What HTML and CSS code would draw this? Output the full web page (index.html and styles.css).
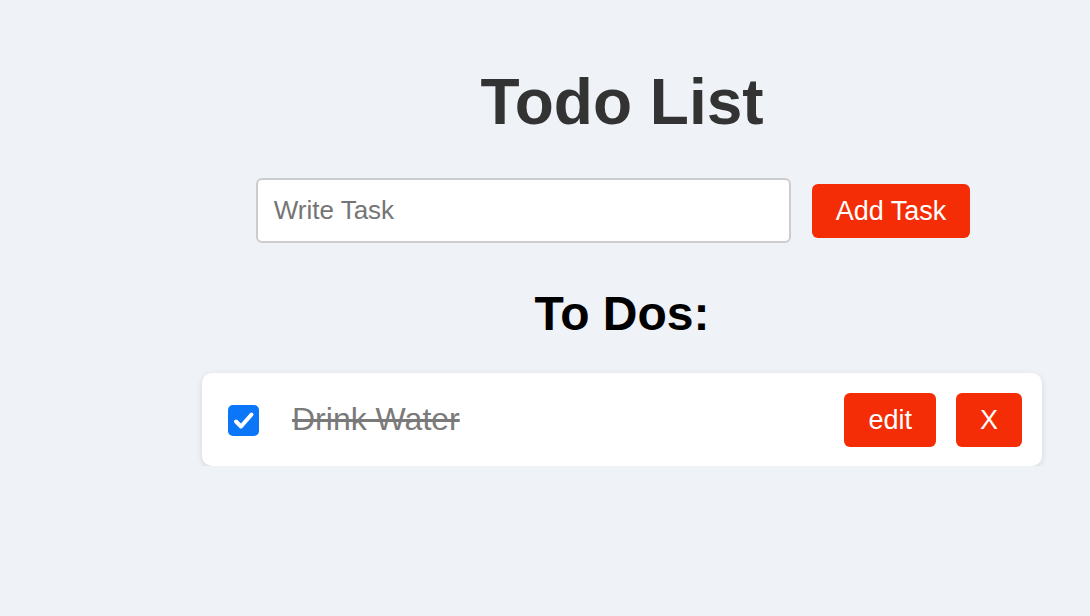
FILE: index.html
```html
<!DOCTYPE html>
<html>
<head>
<meta charset="utf-8">
<link rel="stylesheet" href="styles.css">
</head>
<body>
<div class="app">
  <h1 class="title">Todo List</h1>
  <div class="add-row">
    <input class="task-input" type="text" placeholder="Write Task">
    <button class="btn add-btn">Add Task</button>
  </div>
  <h2 class="subtitle">To Dos:</h2>
  <div class="todo-card">
    <span class="check">
      <svg width="31" height="31" viewBox="0 0 31 31"><rect width="31" height="31" rx="5" fill="#0b76f7"/><path d="M8 16.5 L13 21.5 L23.5 9.5" fill="none" stroke="#fff" stroke-width="4" stroke-linecap="round" stroke-linejoin="round"/></svg>
    </span>
    <span class="todo-text">Drink Water</span>
    <div class="actions">
      <button class="btn">edit</button>
      <button class="btn">X</button>
    </div>
  </div>
</div>
</body>
</html>
```
FILE: styles.css
```css
html, body {
  margin: 0;
  padding: 0;
  background: #eff2f7;
  font-family: "Liberation Sans", Arial, sans-serif;
}
.app {
  width: 840px;
  margin-left: 202px;
  display: flex;
  flex-direction: column;
  align-items: center;
}
.title {
  margin: 65px 0 0;
  font-size: 64px;
  line-height: 74px;
  color: #333;
  font-weight: bold;
}
.add-row {
  margin-top: 39px;
  display: flex;
  align-items: center;
  gap: 21px;
  padding-right: 18px;
}
.task-input {
  box-sizing: border-box;
  width: 535px;
  height: 65px;
  border: 2px solid #cccccc;
  border-radius: 6px;
  padding: 0 16px;
  font-family: "Liberation Sans", Arial, sans-serif;
  font-size: 26px;
  color: #333;
  background: #fff;
  outline: none;
}
.task-input::placeholder {
  color: #757575;
}
.btn {
  background: #f52d06;
  color: #fff;
  border: none;
  border-radius: 6px;
  font-family: "Liberation Sans", Arial, sans-serif;
  font-size: 27px;
  line-height: 30px;
  padding: 12px 24px;
  cursor: pointer;
}
.subtitle {
  margin: 43px 0 0;
  font-size: 48px;
  line-height: 56px;
  color: #000;
  font-weight: bold;
}
.todo-card {
  box-sizing: border-box;
  width: 840px;
  margin-top: 31px;
  height: 93px;
  background: #fff;
  border-radius: 10px;
  box-shadow: 0 2px 6px rgba(0, 0, 0, 0.12);
  display: flex;
  align-items: center;
  padding: 0 20px 0 26px;
}
.check {
  display: flex;
  width: 31px;
  height: 31px;
  margin-top: 2px;
}
.todo-text {
  margin-left: 33px;
  font-size: 32px;
  color: #7a7a7a;
  text-decoration: line-through;
}
.actions {
  margin-left: auto;
  display: flex;
  gap: 20px;
}
```
